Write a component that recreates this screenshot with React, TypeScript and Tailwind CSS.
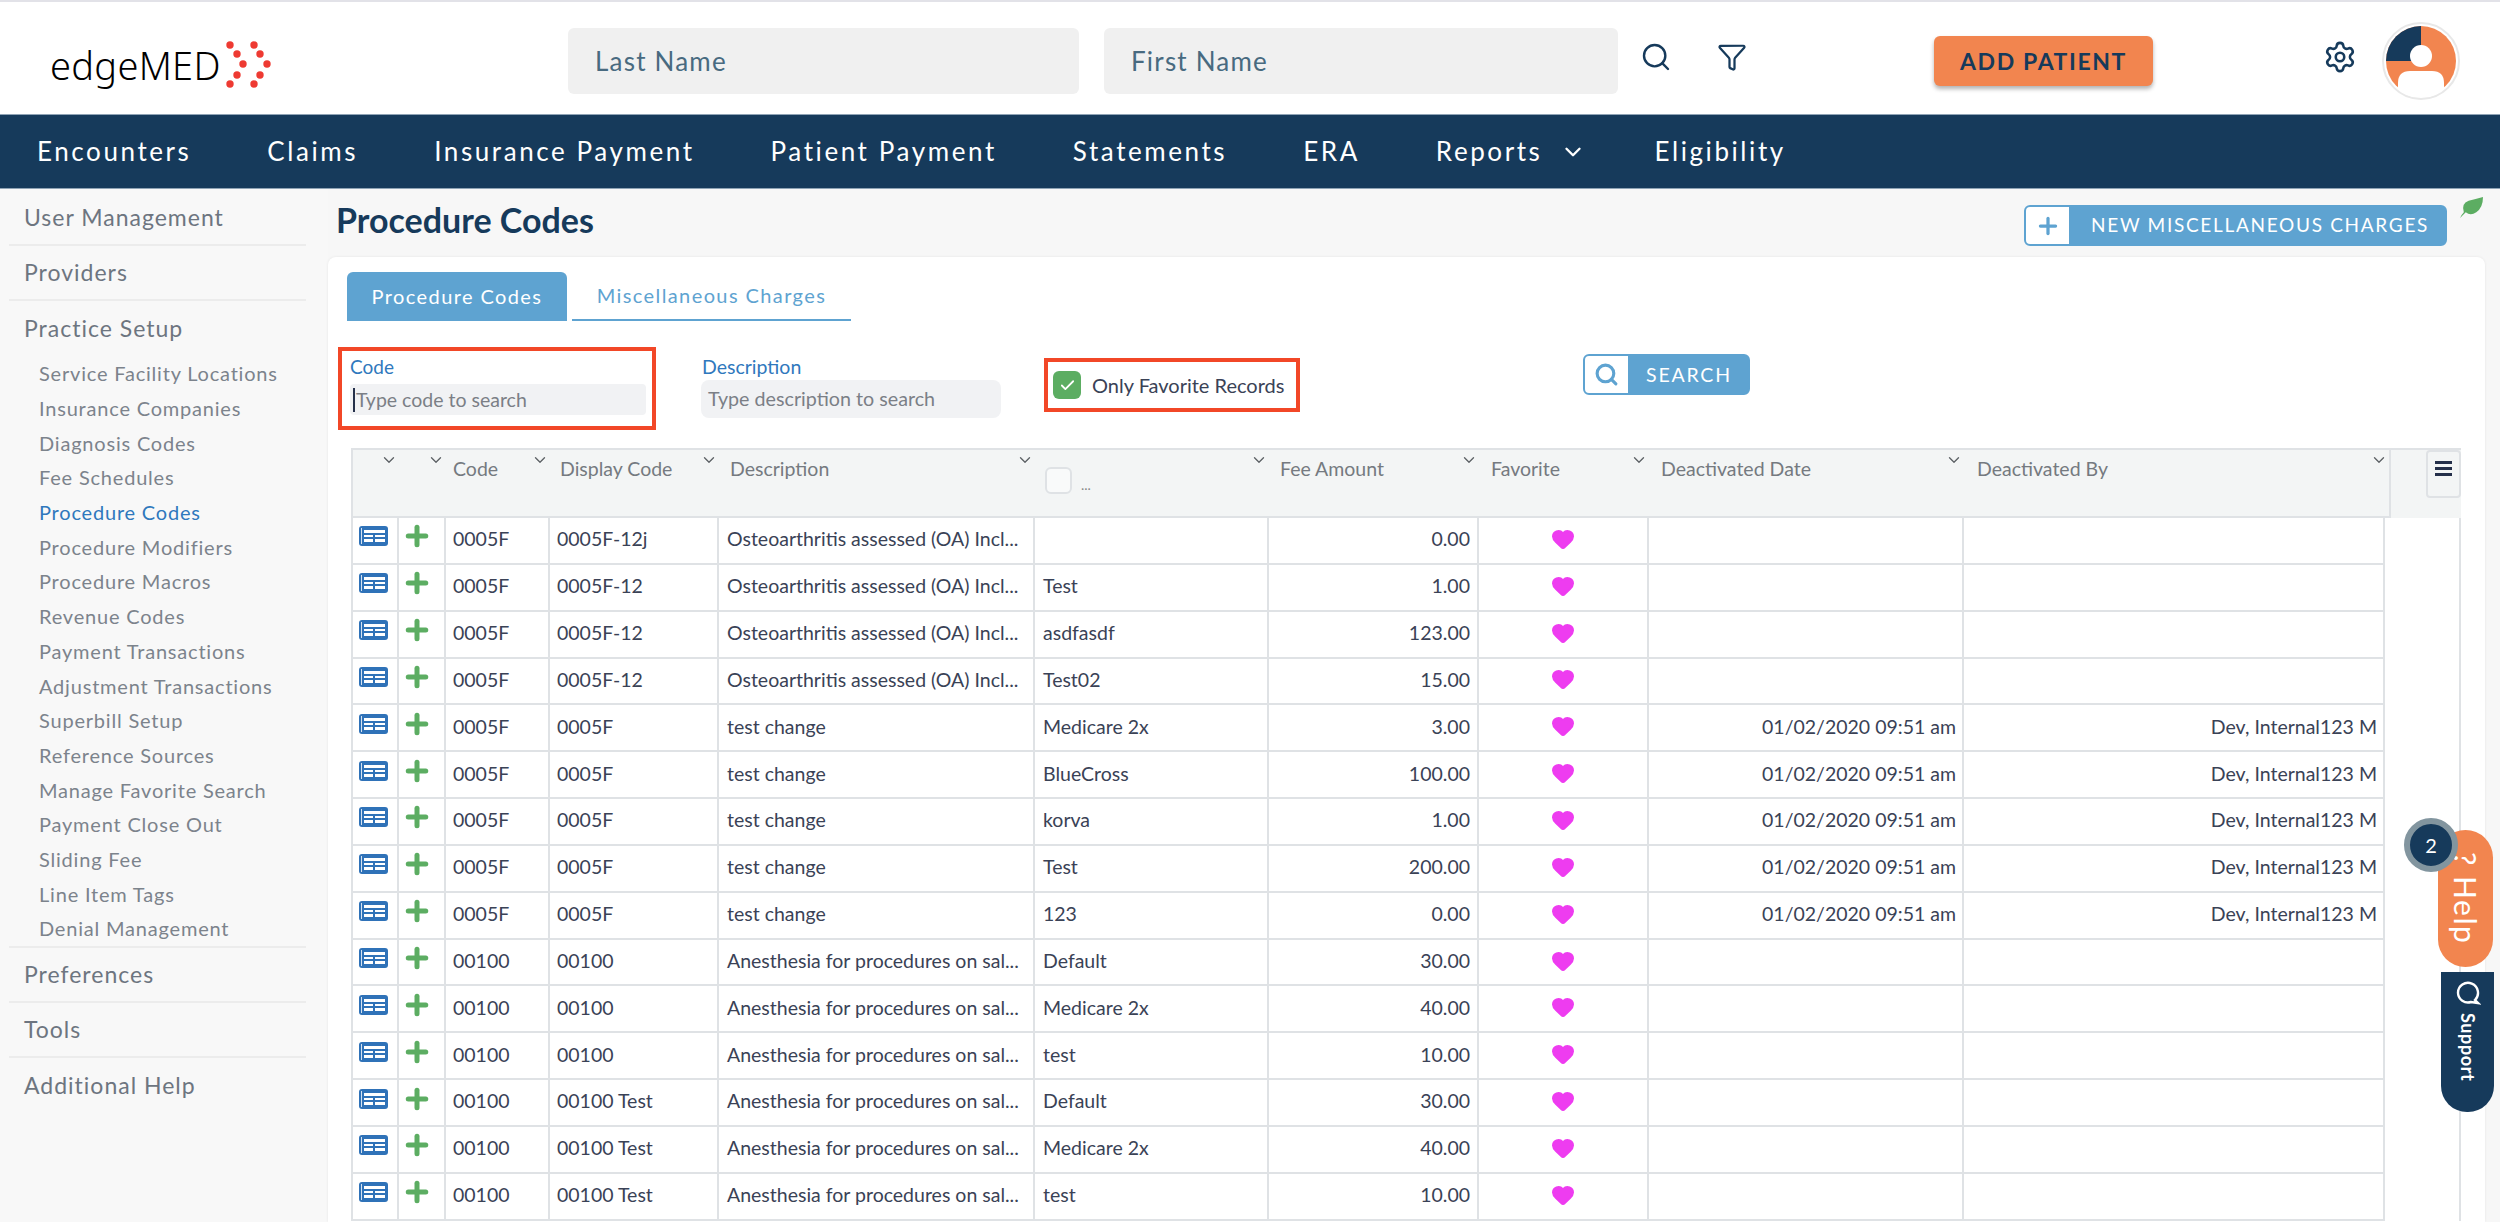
import { ChevronDown, Search, Filter, Settings, Plus, Check, Heart } from 'lucide-react';

const FONT = "font-['Lato','Noto_Sans',sans-serif]";

const NAV = ['Encounters', 'Claims', 'Insurance Payment', 'Patient Payment', 'Statements', 'ERA', 'Reports', 'Eligibility'];

const SETUP_ITEMS = [
  'Service Facility Locations',
  'Insurance Companies',
  'Diagnosis Codes',
  'Fee Schedules',
  'Procedure Codes',
  'Procedure Modifiers',
  'Procedure Macros',
  'Revenue Codes',
  'Payment Transactions',
  'Adjustment Transactions',
  'Superbill Setup',
  'Reference Sources',
  'Manage Favorite Search',
  'Payment Close Out',
  'Sliding Fee',
  'Line Item Tags',
  'Denial Management',
];

const OA = 'Osteoarthritis assessed (OA) Incl...';
const AN = 'Anesthesia for procedures on sal...';
const DEACT = '01/02/2020 09:51 am';
const BY = 'Dev, Internal123 M';

const ROWS = [
  ['0005F', '0005F-12j', OA, '', '0.00', '', ''],
  ['0005F', '0005F-12', OA, 'Test', '1.00', '', ''],
  ['0005F', '0005F-12', OA, 'asdfasdf', '123.00', '', ''],
  ['0005F', '0005F-12', OA, 'Test02', '15.00', '', ''],
  ['0005F', '0005F', 'test change', 'Medicare 2x', '3.00', DEACT, BY],
  ['0005F', '0005F', 'test change', 'BlueCross', '100.00', DEACT, BY],
  ['0005F', '0005F', 'test change', 'korva', '1.00', DEACT, BY],
  ['0005F', '0005F', 'test change', 'Test', '200.00', DEACT, BY],
  ['0005F', '0005F', 'test change', '123', '0.00', DEACT, BY],
  ['00100', '00100', AN, 'Default', '30.00', '', ''],
  ['00100', '00100', AN, 'Medicare 2x', '40.00', '', ''],
  ['00100', '00100', AN, 'test', '10.00', '', ''],
  ['00100', '00100 Test', AN, 'Default', '30.00', '', ''],
  ['00100', '00100 Test', AN, 'Medicare 2x', '40.00', '', ''],
  ['00100', '00100 Test', AN, 'test', '10.00', '', ''],
];

function Logo() {
  const dots = [
    [3, 4], [10, 13], [16, 23], [10, 34], [3, 43],
    [27, 4], [33, 13], [40, 23], [33, 34], [27, 43],
  ];
  return (
    <div className="flex items-center">
      <span className="w-[176px] font-['Noto_Sans',sans-serif] text-[38px] font-light leading-none tracking-[0.3px] text-black">edgeMED</span>
      <svg width="46" height="48" viewBox="0 0 46 48">
        {dots.map(([x, y]) => (
          <circle key={`${x}-${y}`} cx={x + 1} cy={y} r="3.7" fill="#ee3a32" />
        ))}
      </svg>
    </div>
  );
}

function Avatar() {
  return (
    <div className="h-[78px] w-[78px] rounded-full border-2 border-[#e8e8e8] p-[1px]">
      <svg viewBox="0 0 72 72" className="h-full w-full">
        <circle cx="36" cy="36" r="35" fill="#f2854f" />
        <path d="M36 1 A35 35 0 0 0 1 36 L30 36 Q36 36 36 30 Z" fill="#163a5b" />
        <circle cx="36" cy="31" r="11" fill="#fff" />
        <path d="M13 64 V58 Q13 46 25 46 H47 Q59 46 59 58 V64 A35 35 0 0 1 13 64 Z" fill="#fff" />
      </svg>
    </div>
  );
}

function Header() {
  return (
    <header className="flex h-[114px] items-center border-t-2 border-[#e2e2e8] bg-white">
      <div className="ml-[50px] mt-[14px] w-[518px]">
        <Logo />
      </div>
      <div className="mt-[6px] flex h-[66px] w-[511px] items-center rounded-md bg-[#f0f0f0] pl-[27px] text-[26px] tracking-[1.2px] text-[#486a80]">Last Name</div>
      <div className="ml-[25px] mt-[6px] flex h-[66px] w-[514px] items-center rounded-md bg-[#f0f0f0] pl-[27px] text-[26px] tracking-[1.2px] text-[#486a80]">First Name</div>
      <Search className="ml-[22px] mt-[-2px] h-[32px] w-[32px] text-[#163a5b]" strokeWidth={1.8} />
      <Filter className="ml-[45px] mt-[-2px] h-[30px] w-[30px] text-[#163a5b]" strokeWidth={1.8} />
      <button className="ml-[187px] mt-[6px] h-[50px] w-[219px] rounded-md bg-[#f2854f] text-[23px] font-bold tracking-[1.6px] text-[#163a5b] shadow-[0_3px_4px_rgba(0,0,0,0.3)]">ADD PATIENT</button>
      <Settings className="ml-[170px] mt-[-2px] h-[34px] w-[34px] text-[#163a5b]" strokeWidth={1.8} />
      <div className="ml-[25px] mt-[6px]">
        <Avatar />
      </div>
    </header>
  );
}

function NavBar() {
  return (
    <nav className="flex h-[75px] items-center gap-[76px] border-y border-[#8fa3b5] bg-[#163a5b] pl-[37px] text-[26px] tracking-[2.58px] text-white">
      {NAV.map((n) => (
        <div key={n} className="flex items-center">
          {n}
          {n === 'Reports' && <ChevronDown className="-mr-[8px] ml-[18px] h-[26px] w-[26px]" strokeWidth={2.2} />}
        </div>
      ))}
    </nav>
  );
}

function Sidebar() {
  const top = 'flex h-[55px] items-center text-[23px] tracking-[1px] text-[#6d7580]';
  return (
    <aside className="w-[328px] shrink-0 bg-[#f8f8f8] pl-[9px] pr-[22px] pt-[2px]">
      <div className={`${top} border-b-2 border-[#ececec] pl-[15px]`}>User Management</div>
      <div className={`${top} border-b-2 border-[#ececec] pl-[15px]`}>Providers</div>
      <div className={`${top} pl-[15px]`}>Practice Setup</div>
      <div className="border-b-2 border-[#ececec] pl-[30px]">
        {SETUP_ITEMS.map((s) => (
          <div key={s} className={`flex h-[34.7px] items-center text-[20px] tracking-[0.8px] ${s === 'Procedure Codes' ? 'text-[#2f78bd]' : 'text-[#7c838c]'}`}>{s}</div>
        ))}
      </div>
      <div className={`${top} border-b-2 border-[#ececec] pl-[15px]`}>Preferences</div>
      <div className={`${top} border-b-2 border-[#ececec] pl-[15px]`}>Tools</div>
      <div className={`${top} pl-[15px]`}>Additional Help</div>
    </aside>
  );
}

function TableIcon() {
  return (
    <svg width="29" height="20" viewBox="0 0 29 20" className="ml-[-4px] mt-[-8px]">
      <rect width="29" height="20" rx="3" fill="#2f72b8" />
      <path d="M5 4h21v12H5z" fill="#fff" />
      <path d="M5 8h21M5 12h21M15 8v8" stroke="#2f72b8" strokeWidth="2" />
      <path d="M2.5 2v16" stroke="#fff" strokeWidth="0.8" />
    </svg>
  );
}

function HeaderCell({ label, pad = 'pl-[11px]' }: { label?: string; pad?: string }) {
  return (
    <div className={`relative ${pad} pt-[7px]`}>
      {label && <span className="text-[19.5px] leading-[24px] text-[#757a80]">{label}</span>}
      <ChevronDown className="absolute right-[1px] top-[1px] h-[18px] w-[18px] text-[#5f6468]" strokeWidth={1.8} />
    </div>
  );
}

function DataTable() {
  return (
    <div className="relative ml-[23px] mt-[18px] w-[2110px]">
      <div className="flex h-[70px]">
        <div className="grid h-[70px] grid-cols-[46px_47px_104px_169px_316px_234px_210px_170px_315px_425px] border-2 border-[#dfe2e5] bg-[#f3f5f5]">
          <HeaderCell />
          <HeaderCell />
          <HeaderCell label="Code" pad="pl-[7px]" />
          <HeaderCell label="Display Code" pad="pl-[10px]" />
          <HeaderCell label="Description" pad="pl-[11px]" />
          <div className="relative pl-[10px] pt-[16px]">
            <div className="flex items-center gap-[9px] text-[#888]">
              <div className="h-[27px] w-[27px] rounded-md border-2 border-[#dfe2e5] bg-white/50" />
              <span className="mt-[8px] text-[14px]">...</span>
            </div>
            <ChevronDown className="absolute right-[1px] top-[1px] h-[18px] w-[18px] text-[#5f6468]" strokeWidth={1.8} />
          </div>
          <HeaderCell label="Fee Amount" />
          <HeaderCell label="Favorite" pad="pl-[12px]" />
          <HeaderCell label="Deactivated Date" pad="pl-[12px]" />
          <HeaderCell label="Deactivated By" pad="pl-[13px]" />
        </div>
        <div className="flex flex-1 items-start justify-end border-t-2 border-[#dfe2e5] bg-[#f3f5f5]">
          <div className="flex h-[48px] w-[35px] flex-col items-center gap-[3px] rounded-sm border-2 border-[#dfe2e5] pt-[9px]">
            <span className="h-[3px] w-[17px] bg-[#25304a]" />
            <span className="h-[3px] w-[17px] bg-[#25304a]" />
            <span className="h-[3px] w-[17px] bg-[#25304a]" />
          </div>
        </div>
      </div>
      <div className="w-[2034px] border-x-2 border-[#dfe2e5] text-[19.5px] text-[#3a4256]">
        {ROWS.map((r, i) => (
          <div key={i} className="grid h-[46.85px] grid-cols-[46px_47px_104px_169px_316px_234px_210px_170px_315px_419px] border-b-[2.5px] border-[#dfe2e5]">
            <div className="flex items-center justify-center border-r-2 border-[#dfe2e5]"><TableIcon /></div>
            <div className="flex items-center justify-center border-r-2 border-[#dfe2e5]">
              <Plus className="mr-[10px] mt-[-8px] h-[30px] w-[30px] text-[#5cad62]" strokeWidth={4} />
            </div>
            <div className="flex items-center border-r-2 border-[#dfe2e5] pb-[3px] pl-[7px]">{r[0]}</div>
            <div className="flex items-center border-r-2 border-[#dfe2e5] pb-[3px] pl-[7px]">{r[1]}</div>
            <div className="flex items-center border-r-2 border-[#dfe2e5] pb-[3px] pl-[8px]">{r[2]}</div>
            <div className="flex items-center border-r-2 border-[#dfe2e5] pb-[3px] pl-[8px]">{r[3]}</div>
            <div className="flex items-center justify-end border-r-2 border-[#dfe2e5] pb-[3px] pr-[7px]">{r[4]}</div>
            <div className="flex items-center justify-center border-r-2 border-[#dfe2e5]">
              <Heart className="mt-[-3px] h-[24px] w-[24px] text-[#ee3cf0]" fill="currentColor" />
            </div>
            <div className="flex items-center justify-end border-r-2 border-[#dfe2e5] pb-[3px] pr-[6px]">{r[5]}</div>
            <div className="flex items-center justify-end pb-[3px] pr-[6px]">{r[6]}</div>
          </div>
        ))}
      </div>
      <div className="absolute bottom-0 left-[2108px] top-[70px] w-[2px] bg-[#dfe2e5]" />
    </div>
  );
}

function Filters() {
  return (
    <div className="mt-[26px] flex items-start pl-[10px]">
      <div className="h-[83px] w-[318px] border-4 border-[#f24727] pl-[8px] pr-[6px] pt-[5px]">
        <div className="text-[19px] leading-[22px] text-[#2f78bd]">Code</div>
        <div className="mt-[6px] flex h-[31px] items-center rounded-sm bg-[#f1f2f4] pl-[3px] text-[19.5px] text-[#7b7f86]">
          <span className="mr-[1px] h-[24px] w-[2px] bg-[#25304a]" />Type code to search
        </div>
      </div>
      <div className="ml-[45px] w-[300px] pt-[9px]">
        <div className="pl-[1px] text-[19.5px] leading-[22px] text-[#2f78bd]">Description</div>
        <div className="mt-[2px] flex h-[38px] items-center rounded-lg bg-[#f1f2f4] pl-[7px] text-[19.7px] text-[#7b7f86]">Type description to search</div>
      </div>
      <div className="ml-[43px] mt-[11px] flex h-[54px] w-[256px] items-center gap-[11px] border-4 border-[#f24727] pl-[5px]">
        <div className="flex h-[28px] w-[28px] items-center justify-center rounded-md bg-[#5cad62]">
          <Check className="h-[17px] w-[17px] text-white" strokeWidth={2.5} />
        </div>
        <span className="text-[20px] text-[#3a4256]">Only Favorite Records</span>
      </div>
      <button className="ml-[283px] mt-[7px] flex h-[41px] w-[167px] items-center rounded-md border-2 border-[#5ea3d1] bg-[#5ea3d1] text-[19.5px] tracking-[1.8px] text-white">
        <span className="flex h-full w-[43px] items-center justify-center rounded-l-[4px] bg-white">
          <Search className="h-[25px] w-[25px] text-[#5ea3d1]" strokeWidth={3} />
        </span>
        <span className="ml-[18px]">SEARCH</span>
      </button>
    </div>
  );
}

function Main() {
  return (
    <main className="min-w-0 flex-1 bg-[#f7f7f7]">
      <div className="relative flex h-[68px] items-start justify-between pl-[8px] pr-[53px]">
        <h1 className="mt-[11px] text-[34px] font-bold leading-[40px] text-[#163a5b]">Procedure Codes</h1>
        <button className="mt-[16px] flex h-[41px] w-[423px] items-center rounded-md border-2 border-[#5ea3d1] bg-[#5ea3d1] text-[19px] tracking-[1.7px] text-white">
          <span className="flex h-full w-[43px] items-center justify-center rounded-l-[4px] bg-white">
            <Plus className="h-[26px] w-[26px] text-[#5ea3d1]" strokeWidth={3} />
          </span>
          <span className="ml-[22px]">NEW MISCELLANEOUS CHARGES</span>
        </button>
        <svg width="27" height="23" viewBox="0 0 28 24" className="absolute right-[15px] top-[7px]">
          <path d="M2 23 Q4 19 6 17 Q3 8 11 5 Q18 3 26 1 Q26 12 19 17 Q13 21 8 17 Q5 20 2 23 Z" fill="#5cad62" />
        </svg>
      </div>
      <div className="mr-[15px] h-[965px] overflow-hidden rounded-t-lg bg-white shadow-[0_0_3px_rgba(0,0,0,0.08)]">
        <div className="flex items-end pl-[19px] pt-[15px]">
          <div className="flex h-[49px] w-[220px] items-center justify-center rounded-t-md bg-[#5ea3d1] pb-[2px] text-[20px] tracking-[1.4px] text-white">Procedure Codes</div>
          <div className="ml-[5px] flex h-[49px] w-[279px] items-center justify-center border-b-2 border-[#5ea3d1] pb-[2px] text-[20px] tracking-[1.4px] text-[#5ea3d1]">Miscellaneous Charges</div>
        </div>
        <Filters />
        <DataTable />
      </div>
    </main>
  );
}

function HelpTabs() {
  return (
    <>
      <div className="absolute left-[2438px] top-[830px] flex h-[137px] w-[55px] items-center justify-center rounded-full bg-[#f2854f] text-[30px] tracking-[1.5px] text-white [writing-mode:vertical-rl]">
        ? Help
      </div>
      <div className="absolute left-[2404px] top-[818px] flex h-[54px] w-[54px] items-center justify-center rounded-full border-[6px] border-[#82959f] bg-[#163a5b] text-[20px] text-white">2</div>
      <div className="absolute left-[2441px] top-[972px] flex h-[140px] w-[53px] flex-col items-center rounded-b-[26px] bg-[#163a5b] pt-[8px] text-white">
        <svg width="26" height="26" viewBox="0 0 26 26" className="-rotate-90 fill-none stroke-white" strokeWidth="2.4">
          <path d="M13 3a10 10 0 1 1-7 17l-3 3 1-7a10 10 0 0 1 9-13z" />
        </svg>
        <span className="mt-[7px] text-[18px] font-bold tracking-[0.6px] [writing-mode:vertical-rl]">Support</span>
      </div>
    </>
  );
}

export default function App() {
  return (
    <div className={`relative h-[1222px] w-[2500px] overflow-hidden bg-[#f7f7f7] ${FONT}`}>
      <Header />
      <NavBar />
      <div className="flex">
        <Sidebar />
        <Main />
      </div>
      <HelpTabs />
    </div>
  );
}
